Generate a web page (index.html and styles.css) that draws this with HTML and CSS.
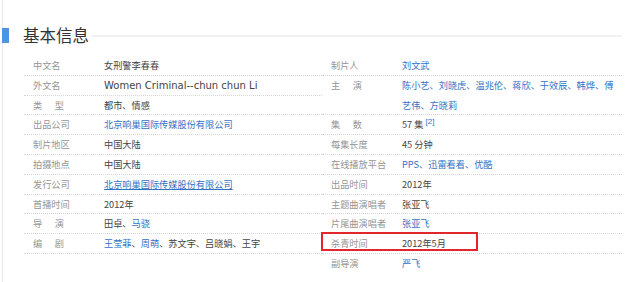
FILE: index.html
```html
<!DOCTYPE html>
<html lang="zh-CN">
<head>
<meta charset="utf-8">
<title>基本信息</title>
<link rel="stylesheet" href="styles.css">
</head>
<body>
<div class="page">
  <div class="title-row">
    <span class="bar"></span>
    <h2 class="title">基本信息</h2>
    <span class="rule"></span>
  </div>
  <div class="info">
    <dl class="col">
      <div class="row"><dt>中文名</dt><dd>女刑警李春春</dd></div>
      <div class="row"><dt>外文名</dt><dd><span class="en">Women Criminal--chun chun Li</span></dd></div>
      <div class="row"><dt class="sp">类型</dt><dd>都市、情感</dd></div>
      <div class="row"><dt>出品公司</dt><dd><a class="link">北京响巢国际传媒股份有限公司</a></dd></div>
      <div class="row"><dt>制片地区</dt><dd>中国大陆</dd></div>
      <div class="row"><dt>拍摄地点</dt><dd>中国大陆</dd></div>
      <div class="row"><dt>发行公司</dt><dd><a class="link under">北京响巢国际传媒股份有限公司</a></dd></div>
      <div class="row"><dt>首播时间</dt><dd>2012年</dd></div>
      <div class="row"><dt class="sp">导演</dt><dd>田卓、<a class="link">马骁</a></dd></div>
      <div class="row"><dt class="sp">编剧</dt><dd><a class="link">王莹菲</a>、<a class="link">周萌</a>、苏文宇、吕晓娟、王宇</dd></div>
    </dl>
    <dl class="col">
      <div class="row"><dt>制片人</dt><dd><a class="link">刘文武</a></dd></div>
      <div class="row tall"><dt class="sp">主演</dt><dd class="blue"><span class="line"><a class="link">陈小艺</a>、<a class="link">刘晓虎</a>、<a class="link">温兆伦</a>、<a class="link">蒋欣</a>、<a class="link">于效辰</a>、<a class="link">韩烨</a>、<a class="link">傅</a></span><span class="line"><a class="link">艺伟</a>、<a class="link">方晓莉</a></span></dd></div>
      <div class="row"><dt class="sp">集数</dt><dd>57 集 <sup class="ref">[2]</sup></dd></div>
      <div class="row"><dt>每集长度</dt><dd>45 分钟</dd></div>
      <div class="row"><dt>在线播放平台</dt><dd class="blue"><a class="link">PPS</a>、<a class="link">迅雷看看</a>、<a class="link">优酷</a></dd></div>
      <div class="row"><dt>出品时间</dt><dd>2012年</dd></div>
      <div class="row"><dt>主题曲演唱者</dt><dd>张亚飞</dd></div>
      <div class="row"><dt>片尾曲演唱者</dt><dd><a class="link">张亚飞</a></dd></div>
      <div class="row"><dt>杀青时间</dt><dd>2012年5月</dd><span class="mark"></span></div>
      <div class="row last"><dt>副导演</dt><dd><a class="link">严飞</a></dd></div>
    </dl>
  </div>
</div>
</body>
</html>
```

FILE: styles.css
```css
html, body {
  margin: 0;
  padding: 0;
  background: #ffffff;
}
body {
  font-family: "Noto Sans CJK SC", "Liberation Sans", sans-serif;
  color: #333333;
}
.page {
  margin-left: 2px;
  border-left: 1px solid #e8e8e8;
  height: 282px;
  box-sizing: border-box;
  padding-top: 28px;
}
.title-row {
  display: flex;
  align-items: center;
  height: 15px;
}
.bar {
  width: 7px;
  height: 15px;
  margin-left: -1px;
  background: #4b95e8;
  flex: none;
}
.title {
  margin: 0 0 0 14px;
  font-size: 16.5px;
  font-weight: 400;
  line-height: 15px;
  color: #333333;
}
.rule {
  flex: 1;
  height: 2px;
  background: #f1f1f1;
  margin-left: 3px;
  margin-right: 18px;
}
.info {
  display: flex;
  margin-top: 13px;
  padding-left: 21px;
}
.col {
  margin: 0;
  width: 298px;
  font-size: 9.2px;
}
.col + .col {
  width: 300px;
}
.row {
  display: flex;
  height: 19.8px;
  box-sizing: border-box;
  border-bottom: 1px dotted #d6d6d6;
  line-height: 18.8px;
  position: relative;
}
.row.tall {
  height: 39.6px;
}
.row.tall dd {
  line-height: 19.8px;
}
.line {
  display: block;
  white-space: nowrap;
}
.row.last {
  border-bottom-color: transparent;
}
dt {
  width: 71px;
  padding-left: 9px;
  flex: none;
  color: #959595;
  white-space: nowrap;
}
dt.sp {
  letter-spacing: 12.6px;
}
dd {
  margin: 0;
  flex: 1;
  color: #444444;
}
.en {
  font-family: "DejaVu Sans", sans-serif;
  font-size: 10px;
}
.link {
  color: #3471c4;
  text-decoration: none;
}
.under {
  text-decoration: underline;
}
dd.blue {
  color: #3471c4;
}
.ref {
  color: #3471c4;
  font-family: "Liberation Sans", sans-serif;
  font-size: 8px;
  vertical-align: 4px;
  line-height: 0;
}
.mark {
  position: absolute;
  left: -1px;
  top: -2px;
  width: 157px;
  height: 19px;
  box-sizing: border-box;
  border: 2px solid #e2262c;
}
```
